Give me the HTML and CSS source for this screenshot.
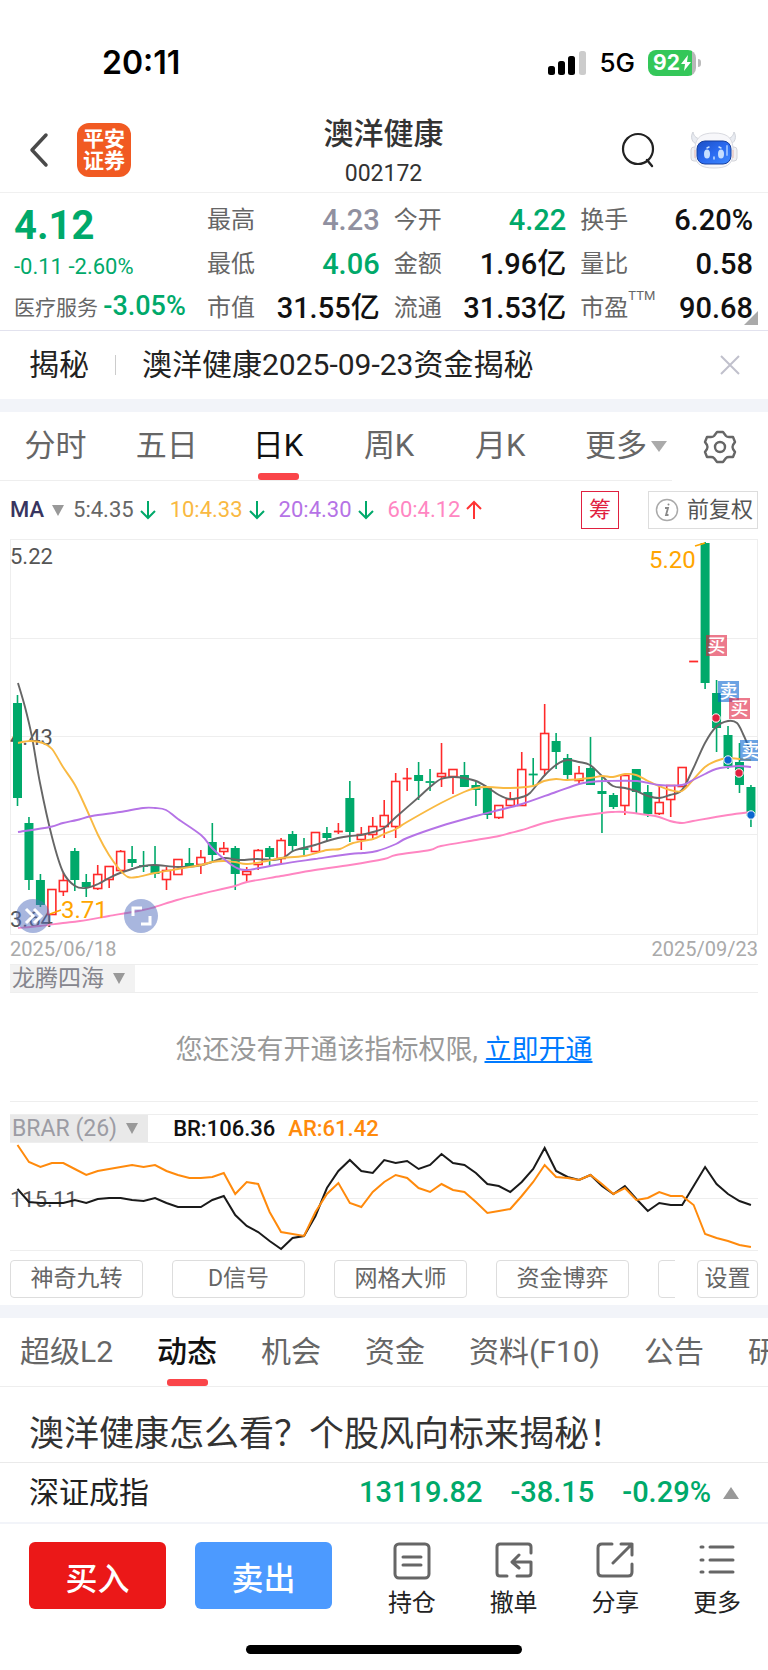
FILE: index.html
```html
<!DOCTYPE html>
<html lang="zh-CN">
<head>
    <meta charset="UTF-8">
    <meta name="viewport" content="width=device-width, initial-scale=1.0">
    <title>澳洋健康 002172</title>
    <link rel="stylesheet" href="styles.css">
</head>
<body>
    <div class="status-bar">
        <span class="time">20:11</span>
        <div class="status-icons">
            <svg class="signal" width="38" height="24" viewBox="0 0 38 24">
                <rect x="0" y="15" width="7" height="9" rx="2.5"/>
                <rect x="10" y="10" width="7" height="14" rx="2.5"/>
                <rect x="20" y="5" width="7" height="19" rx="2.5"/>
                <rect x="31" y="0" width="7" height="24" rx="2.5" fill="#ccc"/>
            </svg>
            <span class="network">5G</span>
            <div class="battery">
                <span>92</span>
                <svg width="12" height="16" viewBox="0 0 12 16"><path d="M8 0L1 9h4l-1 7 7-9H7z" fill="#fff"/></svg>
            </div>
        </div>
    </div>

    <header class="nav">
        <div class="nav-left">
            <button class="icon-button" aria-label="返回">
                <svg width="20" height="36" viewBox="0 0 20 36"><path d="M17 3L3 18l14 15" fill="none" stroke="#4a4a4a" stroke-width="3.5" stroke-linecap="round" stroke-linejoin="round"/></svg>
            </button>
            <a class="logo" href="#">平安<br>证券</a>
        </div>
        <div class="nav-title">
            <h1>澳洋健康</h1>
            <span>002172</span>
        </div>
        <div class="nav-right">
            <button class="icon-button" aria-label="搜索">
                <svg width="34" height="36" viewBox="0 0 34 36"><circle cx="17" cy="17" r="15" fill="none" stroke="#222" stroke-width="2.2"/><path d="M26 28l5 6" stroke="#222" stroke-width="2.4" stroke-linecap="round"/></svg>
            </button>
            <button class="icon-button" aria-label="智能助手">
                <svg width="48" height="38" viewBox="0 0 48 38">
                    <defs>
                        <linearGradient id="screen" x1="0" y1="0" x2="1" y2="1">
                            <stop offset="0" stop-color="#1c4fc4"/><stop offset="0.5" stop-color="#2a6af0"/><stop offset="1" stop-color="#3f8bff"/>
                        </linearGradient>
                    </defs>
                    <path d="M3 1c-3 5-1 11 4 12l5-5C7 8 4 6 3 1zM44 1c3 5 1 11-4 12l-5-5c5 0 8-2 9-7z" fill="#e9ecf2" stroke="#d0d3da"/>
                    <rect x="1" y="16" width="8" height="14" rx="3" fill="#f1f1f4" stroke="#d3d4d9"/>
                    <rect x="39" y="16" width="8" height="14" rx="3" fill="#f1f1f4" stroke="#d3d4d9"/>
                    <path d="M24 2c12 0 18 4 19 14v8c-1 10-7 13-19 13S6 34 5 24v-8C6 6 12 2 24 2z" fill="#f7f7fa" stroke="#d9dae0"/>
                    <path d="M5 19v8M43 19v8" stroke="#efbdb3"/>
                    <rect x="7" y="10" width="34" height="23" rx="8" fill="url(#screen)" stroke="#173f9e"/>
                    <path d="M37 15v9" stroke="#8bb7ff" stroke-width="2" stroke-linecap="round"/>
                    <ellipse cx="17" cy="23" rx="3" ry="4.5" fill="#c6dfff"/>
                    <ellipse cx="31" cy="23" rx="3" ry="4.5" fill="#c6dfff"/>
                    <path d="M17 17l2-1M31 17l-2-1M24 26v2" stroke="#c6dfff" stroke-width="1.5" stroke-linecap="round"/>
                </svg>
            </button>
        </div>
    </header>

    <section class="quote">
        <div class="quote-main">
            <div class="price">4.12</div>
            <div class="change">-0.11 -2.60%</div>
            <div class="sector">医疗服务 <b>-3.05%</b></div>
        </div>
        <dl class="stats">
            <div><dt>最高</dt><dd class="flat">4.23</dd></div>
            <div><dt>今开</dt><dd class="down">4.22</dd></div>
            <div><dt>换手</dt><dd>6.20%</dd></div>
            <div><dt>最低</dt><dd class="down">4.06</dd></div>
            <div><dt>金额</dt><dd>1.96亿</dd></div>
            <div><dt>量比</dt><dd>0.58</dd></div>
            <div><dt>市值</dt><dd>31.55亿</dd></div>
            <div><dt>流通</dt><dd>31.53亿</dd></div>
            <div><dt>市盈<sup>TTM</sup></dt><dd>90.68</dd></div>
        </dl>
    </section>

    <section class="promo">
        <span>揭秘</span>
        <i></i>
        <a href="#">澳洋健康2025-09-23资金揭秘</a>
        <button class="icon-button" aria-label="关闭">
            <svg width="20" height="20" viewBox="0 0 20 20"><path d="M1 1l18 18M19 1L1 19" stroke="#c0c0cc" stroke-width="2"/></svg>
        </button>
    </section>

    <nav class="period">
        <div class="period-tabs">
            <button>分时</button>
            <button>五日</button>
            <button class="active">日K</button>
            <button>周K</button>
            <button>月K</button>
            <button class="more">更多<span class="caret"></span></button>
        </div>
        <button class="icon-button settings" aria-label="设置">
            <svg width="34" height="34" viewBox="0 0 34 34" fill="none" stroke="#666" stroke-width="2.4" stroke-linejoin="round"><path d="M14 2h6l3 4q1 1 3 1h4l2 5-2 3q-1 2 0 4l2 3-2 5h-4q-2 0-3 1l-3 4h-6l-3-4q-1-1-3-1H4l-2-5 2-3q1-2 0-4l-2-3 2-5h4q2 0 3-1z"/><circle cx="17" cy="17" r="5"/></svg>
        </button>
    </nav>

    <section class="ma">
        <button class="ma-name">MA<span class="caret"></span></button>
        <span class="ma5">5:4.35<svg class="arrow"><use href="#arrow-down"/></svg></span>
        <span class="ma10">10:4.33<svg class="arrow"><use href="#arrow-down"/></svg></span>
        <span class="ma20">20:4.30<svg class="arrow"><use href="#arrow-down"/></svg></span>
        <span class="ma60">60:4.12<svg class="arrow"><use href="#arrow-up"/></svg></span>
        <button class="chips">筹</button>
        <button class="adjust">
            <svg width="24" height="24" viewBox="0 0 24 24" fill="none" stroke="#aaa" stroke-width="1.5"><circle cx="12" cy="12" r="10.5"/><path d="M10 10h3l-2 7h2.5" stroke="#888" stroke-width="1.8"/><circle cx="13.5" cy="6.5" r="1" fill="#888" stroke="none"/></svg>
            前复权
        </button>
    </section>
    <svg class="defs" width="0" height="0">
        <symbol id="arrow-down" viewBox="0 0 16 20"><path d="M8 1v17M1 11l7 7 7-7" fill="none" stroke="#00a96a" stroke-width="2"/></symbol>
        <symbol id="arrow-up" viewBox="0 0 16 20"><path d="M8 19V2M1 9l7-7 7 7" fill="none" stroke="#ff3333" stroke-width="2"/></symbol>
    </svg>

    <section class="charts">
        <div class="kline">
            <svg id="kline" viewBox="0 0 748 396"></svg>
            <button class="round expand" aria-label="展开">
                <svg width="34" height="34" viewBox="0 0 34 34"><path d="M10 10l7 7-7 7M18 10l7 7-7 7" fill="none" stroke="#fff" stroke-width="3"/></svg>
            </button>
            <button class="round full" aria-label="全屏">
                <svg width="34" height="34" viewBox="0 0 34 34"><path d="M9 17V9h9M26 17v8h-9" fill="none" stroke="#fff" stroke-width="3"/></svg>
            </button>
        </div>
        <div class="dates"><span>2025/06/18</span><span>2025/09/23</span></div>

        <div class="indicator-head">
            <button class="tag">龙腾四海<span class="caret"></span></button>
        </div>
        <p class="locked">您还没有开通该指标权限, <a href="#">立即开通</a></p>

        <div class="indicator-head">
            <button class="tag dark">BRAR (26)<span class="caret"></span></button>
            <b class="br">BR:106.36</b>
            <b class="ar">AR:61.42</b>
        </div>
        <svg id="brar" viewBox="0 0 748 108"></svg>

        <div class="tools">
            <div class="tools-list">
                <button>神奇九转</button>
                <button>D信号</button>
                <button>网格大师</button>
                <button>资金博弈</button>
                <button aria-label="更多指标"></button>
            </div>
            <button class="tools-set">设置</button>
        </div>
    </section>

    <nav class="info-tabs">
        <a href="#">超级L2</a>
        <a href="#" class="active">动态</a>
        <a href="#">机会</a>
        <a href="#">资金</a>
        <a href="#">资料(F10)</a>
        <a href="#">公告</a>
        <a href="#">研报</a>
    </nav>

    <h2 class="headline">澳洋健康怎么看？个股风向标来揭秘！</h2>

    <section class="index-row">
        <span class="index-name">深证成指</span>
        <b>13119.82</b>
        <b>-38.15</b>
        <b>-0.29%</b>
        <span class="caret up"></span>
    </section>

    <footer class="actions">
        <button class="trade buy">买入</button>
        <button class="trade sell">卖出</button>
        <div class="action-list">
            <button>
                <svg width="38" height="38" viewBox="0 0 38 38"><rect x="2" y="2" width="34" height="34" rx="4"/><path d="M10 15h18M10 23h18"/></svg>
                持仓
            </button>
            <button>
                <svg width="38" height="38" viewBox="0 0 38 38"><path d="M36 11V5q0-3-3-3H5Q2 2 2 5v26q0 3 3 3h7M22 34h11q3 0 3-3V20H18M24 13l-7 7 7 6"/></svg>
                撤单
            </button>
            <button>
                <svg width="38" height="38" viewBox="0 0 38 38"><path d="M16 2H6Q2 2 2 6v24q0 4 4 4h26q4 0 4-4v-8M25 2h11v11M36 2L17 21"/></svg>
                分享
            </button>
            <button>
                <svg width="38" height="38" viewBox="0 0 38 38"><path d="M3 5h2M12 5h23M3 18h2M12 18h23M3 30h2M12 30h23"/></svg>
                更多
            </button>
        </div>
    </footer>
    <div class="home-bar"></div>

    <script src="script.js"></script>
</body>
</html>
```
FILE: styles.css
```css
* {
    box-sizing: border-box;
}
body {
    margin: 0;
    background-color: #fff;
    color: #222;
    font-family: Roboto, "Noto Sans CJK SC", sans-serif;
    font-size: 24px;
    overflow-x: hidden;
}
button {
    margin: 0;
    padding: 0;
    border: none;
    background: none;
    color: inherit;
    font: inherit;
    white-space: nowrap;
}
a {
    color: inherit;
    text-decoration: none;
}
h1, h2, p, dl, dd {
    margin: 0;
    font-weight: normal;
}
svg {
    display: block;
}
.defs {
    position: absolute;
}
.icon-button {
    display: flex;
    align-items: center;
}
.caret {
    border: 6px solid transparent;
    border-top: 11px solid #999;
    border-bottom: none;
}

/* status bar */
.status-bar {
    display: flex;
    justify-content: space-between;
    align-items: center;
    padding: 43px 72px 25px 102px;
    line-height: 40px;
    color: #000;
    font-family: Inter, sans-serif;
}
.time {
    font-size: 32px;
    font-weight: 600;
}
.status-icons {
    display: flex;
    align-items: center;
    gap: 13px;
}
.network {
    font-size: 26px;
    font-weight: 500;
}
.battery {
    display: flex;
    align-items: center;
    position: relative;
    width: 48px;
    height: 26px;
    padding-left: 5px;
    border-radius: 8px;
    background: linear-gradient(to right, #34c759 44px, #b8b8b8 44px);
    color: #fff;
    font-size: 21px;
    font-weight: 700;
}
.battery::after {
    content: "";
    position: absolute;
    right: -5px;
    top: 9px;
    width: 3px;
    height: 8px;
    border-radius: 0 4px 4px 0;
    background-color: #bbb;
}

/* title bar */
.nav {
    display: grid;
    grid-template-columns: 1fr auto 1fr;
    align-items: center;
    height: 85px;
    padding: 0 30px 0 29px;
    border-bottom: 1px solid #f0f0f0;
}
.nav-left {
    display: flex;
    align-items: center;
    gap: 28px;
}
.nav-right {
    display: flex;
    align-items: center;
    justify-content: flex-end;
    gap: 35px;
}
.logo {
    width: 54px;
    height: 54px;
    padding-top: 5px;
    border-radius: 12px;
    background-color: #f15a22;
    color: #fff;
    font-size: 21px;
    font-weight: bold;
    line-height: 22px;
    text-align: center;
}
.nav-title {
    padding-top: 5px;
    text-align: center;
    color: #333;
}
.nav-title h1 {
    font-size: 30px;
    font-weight: 500;
    line-height: 42px;
}
.nav-title span {
    display: block;
    font-size: 23px;
    line-height: 37px;
}

/* quote */
.quote {
    display: grid;
    grid-template-columns: 179px 1fr;
    gap: 14px;
    position: relative;
    padding: 5px 15px 0 14px;
    border-bottom: 1px solid #e2e2ee;
}
.quote::after {
    content: "";
    position: absolute;
    right: 10px;
    bottom: 5px;
    border: 7px solid #aaa;
    border-top-color: transparent;
    border-left-color: transparent;
}
.quote-main {
    display: flex;
    flex-direction: column;
    color: #00a96a;
}
.price {
    font-size: 40px;
    font-weight: bold;
    line-height: 56px;
}
.change {
    font-size: 22px;
    line-height: 26px;
}
.sector {
    margin-top: auto;
    font-size: 21px;
    line-height: 44px;
    white-space: nowrap;
    color: #666;
}
.sector b {
    font-size: 27px;
    font-weight: 500;
    color: #00a96a;
}
.stats {
    display: grid;
    grid-template-columns: repeat(3, 1fr);
    column-gap: 14px;
}
.stats div {
    display: flex;
    justify-content: space-between;
    line-height: 44px;
    white-space: nowrap;
}
.stats dt {
    color: #666;
}
.stats sup {
    font-size: 13px;
    line-height: 0;
    vertical-align: 16px;
}
.stats dd {
    color: #111;
    font-size: 29px;
    font-weight: 500;
}
.stats .down {
    color: #00a96a;
}
.stats .flat {
    color: #9090a0;
}

.promo {
    display: flex;
    align-items: center;
    padding: 0 28px 0 29px;
    border-bottom: 13px solid #f2f4f9;
    font-size: 30px;
    line-height: 68px;
}
.promo i {
    width: 1px;
    height: 20px;
    margin: 0 26px;
    background-color: #ccc;
}
.promo button {
    margin-left: auto;
}

/* period tabs */
.period {
    display: flex;
    font-size: 31px;
    line-height: 68px;
    color: #666;
}
.period-tabs {
    display: flex;
    flex: 7;
    border-bottom: 1px solid #eee;
}
.period-tabs button {
    flex: 1;
    position: relative;
}
.period-tabs .active,
.info-tabs .active {
    color: #111;
}
.period-tabs .active::after,
.info-tabs .active::after {
    content: "";
    position: absolute;
    left: calc(50% - 20px);
    bottom: 0;
    width: 41px;
    height: 7px;
    border-radius: 3px;
    background-color: #fa4549;
}
.period-tabs .more {
    display: flex;
    align-items: center;
    justify-content: flex-end;
    gap: 4px;
    padding-right: 5px;
}
.period-tabs .caret {
    border-width: 11px 8px 0;
    border-top-color: #aaa;
}
.settings {
    flex: 1;
    justify-content: center;
}

/* moving averages */
.ma {
    display: flex;
    align-items: center;
    gap: 14px;
    padding: 10px 10px 10px;
    font-size: 22px;
    line-height: 38px;
}
.ma span, .ma button {
    display: flex;
    align-items: center;
}
.ma .ma-name {
    gap: 8px;
    margin-right: -5px;
    color: #383560;
    font-weight: 500;
}
.arrow {
    width: 16px;
    height: 20px;
    margin-left: 6px;
}
.ma5 { color: #666; }
.ma10 { color: #f9b942; }
.ma20 { color: #b573e6; }
.ma60 { color: #ff86c2; }
.ma .chips {
    margin-left: auto;
    padding: 0 7px;
    border: 1px solid #e0203f;
    color: #e0203f;
    line-height: 36px;
}
.ma .adjust {
    gap: 8px;
    margin-left: 15px;
    padding: 0 4px 0 6px;
    border: 1px solid #ddd;
    color: #555;
    line-height: 36px;
}

/* charts */
.charts {
    padding: 0 10px 7px;
    border-bottom: 13px solid #f2f4f9;
}
.kline {
    position: relative;
}
#kline, #brar {
    width: 100%;
    height: auto;
}
.round {
    position: absolute;
    bottom: 2px;
    width: 34px;
    height: 34px;
    border-radius: 50%;
    background-color: rgba(82, 110, 190, 0.5);
}
.expand { left: 6px; }
.full { left: 114px; }
.axis { fill: #555; font-size: 22px; }
.peak { fill: #ffa500; font-size: 24px; }
.mark { fill: #fff; font-size: 18px; font-weight: 500; text-anchor: middle; }
.dates {
    display: flex;
    justify-content: space-between;
    color: #aaa;
    font-size: 20px;
    line-height: 29px;
}
.indicator-head {
    display: flex;
    align-items: center;
    border-top: 1px solid #eee;
    border-bottom: 1px solid #eee;
    font-size: 22px;
    line-height: 27px;
}
.tag {
    display: flex;
    align-items: center;
    gap: 9px;
    padding: 0 10px 0 2px;
    background-color: #f2f2f2;
    color: #85858d;
    font-size: 23px;
}
.dark {
    background-color: #e9e9e9;
    color: #9c9ca4;
}
.indicator-head b {
    font-weight: 500;
}
.br {
    margin: 0 13px 0 25px;
    color: #111;
}
.ar {
    color: #ff8a0c;
}
.locked {
    margin-bottom: 12px;
    padding-top: 7px;
    border-bottom: 1px solid #eee;
    color: #999;
    font-size: 27px;
    line-height: 101px;
    text-align: center;
}
.locked a {
    color: #007aff;
    text-decoration: underline;
}

/* tool buttons */
.tools {
    display: flex;
    gap: 22px;
    padding-top: 9px;
}
.tools-list {
    display: flex;
    flex: 1;
    gap: 29px;
    overflow: hidden;
}
.tools button {
    flex: none;
    width: 133px;
    height: 38px;
    border: 1px solid #ddd;
    border-radius: 4px;
    color: #666;
    font-size: 23px;
    line-height: 36px;
}
.tools .tools-set {
    width: 61px;
}

/* info */
.info-tabs {
    display: flex;
    gap: 44px;
    padding-left: 20px;
    border-bottom: 1px solid #eee;
    color: #666;
    font-size: 30px;
    line-height: 68px;
    white-space: nowrap;
    overflow: hidden;
}
.info-tabs a {
    position: relative;
}
.info-tabs .active {
    font-weight: 500;
}
.headline {
    padding-left: 29px;
    padding-top: 20px;
    border-bottom: 1px solid #eaeaea;
    color: #333;
    font-size: 35px;
    line-height: 55px;
    white-space: nowrap;
}
.index-row {
    display: flex;
    align-items: center;
    gap: 28px;
    padding: 0 29px 0 29px;
    border-bottom: 2px solid #f2f4f9;
    font-size: 30px;
    line-height: 59px;
}
.index-row b {
    color: #00a96a;
    font-size: 29px;
    font-weight: 500;
}
.index-name {
    margin-right: auto;
}
.up {
    margin-left: -16px;
    border: 8px solid transparent;
    border-top: none;
    border-bottom: 12px solid #999;
}

/* bottom actions */
.actions {
    display: flex;
    gap: 29px;
    padding: 18px 0 24px 29px;
}
.trade {
    width: 137px;
    height: 67px;
    border-radius: 6px;
    color: #fff;
    font-size: 32px;
    font-weight: 500;
}
.buy { background-color: #eb1818; }
.sell { background-color: #4c9aff; }
.action-list {
    display: flex;
    flex: 1;
}
.action-list button {
    display: flex;
    flex: 1;
    flex-direction: column;
    align-items: center;
    gap: 5px;
    line-height: 36px;
}
.action-list svg {
    fill: none;
    stroke: #666;
    stroke-width: 3;
    stroke-linecap: round;
    stroke-linejoin: round;
}
.home-bar {
    width: 276px;
    height: 9px;
    margin: 0 auto 16px;
    border-radius: 5px;
    background-color: #000;
}
```
FILE: script.js
```js
const STEP = 11.46;
const FIRST = 7.5;
const GREEN = '#00a96a';
const RED = '#ff2a2a';

// high, body top, body bottom, low, 1 = rising
const candles = [
    [156,164,259,267,0], [278,284,341,351,0], [335,341,366,368,0], [350,350,376,376,1], [334,341,353,357,1],
    [309,312,341,352,0], [335,343,348,358,0], [326,335,350,351,1], [327,327,341,349,1], [311,312,332,333,1],
    [307,320,324,328,0], [312,326,328,333,0], [307,326,335,339,0], [328,331,341,351,1], [320,320,336,336,1],
    [309,324,328,328,0], [311,318,326,335,1], [284,303,316,322,0], [303,309,313,316,1], [307,309,335,351,0],
    [328,332,336,343,1], [310,311,326,331,1], [307,309,318,327,0], [299,301,320,324,1], [292,295,307,313,0],
    [299,309,311,316,0], [293,293,313,313,1], [288,294,299,303,0], [284,292,293,295,1], [242,259,293,303,0],
    [288,295,301,311,1], [278,287,296,301,1], [261,276,288,299,1], [234,242,288,299,1], [229,239,240,252,1],
    [223,236,242,261,0], [230,242,244,252,0], [204,234,238,248,1], [230,230,238,255,1], [223,236,248,248,0],
    [242,246,251,267,0], [248,249,276,280,0], [266,266,279,280,1], [253,260,267,267,1], [213,230,267,267,1],
    [219,235,236,247,0], [165,194,231,237,1], [194,202,213,230,0], [215,219,236,241,0], [227,234,242,245,1],
    [198,229,246,246,0], [237,252,255,294,0], [254,256,268,270,0], [236,236,267,276,1], [230,230,253,274,0],
    [246,253,275,278,0], [246,263,275,276,1], [246,246,261,278,1], [228,228,248,248,1], [122,122,123,123,1],
    [3,4,144,150,0], [141,154,189,213,0], [187,196,227,230,0], [204,223,246,254,0], [246,248,277,288,0]
];

const averages = [
    { color: '#666', points: [8,144,15,168,22,198,30,244,42,298,53,333,65,347,76,349,88,345,99,339,110,334,122,330,133,327,145,326,168,328,187,327,202,323,214,319,230,321,247,320,263,321,273,319,283,312,293,309,305,306,317,302,328,299,340,297,351,296,363,293,374,289,386,278,409,258,420,248,431,240,443,238,454,239,466,242,477,248,489,256,500,260,512,258,520,254,534,237,546,226,557,221,569,223,580,226,592,237,603,247,615,249,626,252,638,257,649,259,660,256,672,251,683,230,695,204,706,188,718,182,727,184,733,195,737,204,741,214] },
    { color: '#f9b942', points: [8,204,20,202,33,204,42,210,53,228,65,246,76,269,88,296,99,316,110,331,118,338,127,338,145,334,168,330,191,326,202,323,214,322,225,323,237,325,257,322,271,319,294,317,317,311,330,310,343,304,363,300,374,295,386,290,397,283,431,264,454,253,466,249,477,248,500,249,523,247,534,242,546,240,557,241,580,239,592,237,603,238,615,235,626,236,638,242,649,247,660,251,672,252,683,241,695,228,706,222,718,219,729,220,741,221] },
    { color: '#b573e6', points: [8,293,40,288,53,284,67,281,82,277,110,273,133,269,145,269,156,271,168,280,191,296,202,309,214,320,225,328,237,331,271,325,305,320,340,315,353,314,367,312,386,305,397,299,431,287,466,277,489,271,512,265,546,253,569,245,580,243,597,242,627,242,649,246,672,246,683,241,695,235,706,230,718,228,729,227,741,228] },
    { color: '#ff86c2', points: [8,389,30,387,53,384,70,382,99,377,133,371,145,368,167,361,191,355,225,347,237,343,271,337,305,331,340,326,374,320,386,316,420,311,431,307,466,301,489,297,500,294,512,291,534,284,557,279,592,274,603,273,615,273,638,276,649,278,660,282,672,284,683,282,718,276,741,273] }
];

const br = [46,59,60,60,60,57,60,56,55,55,57,58,55,60,64,64,64,57,53,72,83,89,98,106,95,93,73,45,28,17,28,30,17,20,18,26,22,11,20,22,30,41,43,49,39,26,5,28,34,37,32,43,51,43,56,68,60,62,62,43,24,41,51,58,62];
const ar = [2,19,24,20,20,26,32,28,26,24,22,24,22,28,32,35,35,34,30,51,39,41,69,89,91,93,69,51,40,60,64,49,39,32,35,45,49,41,47,49,59,70,68,66,53,39,22,34,35,37,32,41,51,45,57,55,49,53,53,62,91,95,98,102,104];

function line(x1, y1, x2, y2, color, width) {
    return `<line x1="${x1}" y1="${y1}" x2="${x2}" y2="${y2}" stroke="${color}" stroke-width="${width}"/>`;
}

function text(x, y, cls, value) {
    return `<text x="${x}" y="${y}" class="${cls}">${value}</text>`;
}

function candle(c, i) {
    const [high, top, bottom, low, up] = c;
    const x = FIRST + i * STEP;
    const color = up ? RED : GREEN;
    let out = line(x, high, x, top, color, 1.6) + line(x, bottom, x, low, color, 1.6);
    if (bottom - top < 3) {
        out += line(x - 4.5, (top + bottom) / 2, x + 4.5, (top + bottom) / 2, color, 1.8);
    } else if (up) {
        out += `<rect x="${x - 4}" y="${top + 0.5}" width="8" height="${bottom - top - 1}" fill="#fff" stroke="${color}" stroke-width="1.6"/>`;
    } else {
        out += `<rect x="${x - 4.5}" y="${top}" width="9" height="${bottom - top}" fill="${color}"/>`;
    }
    return out;
}

// smooth curve through every point
function curve(flat, color) {
    const p = [];
    for (let i = 0; i < flat.length; i += 2) p.push([flat[i], flat[i + 1]]);
    let d = `M${p[0]}`;
    for (let i = 0; i < p.length - 1; i++) {
        const a = p[i - 1] || p[i], b = p[i], c = p[i + 1], e = p[i + 2] || c;
        d += `C${b[0] + (c[0] - a[0]) / 6} ${b[1] + (c[1] - a[1]) / 6} ${c[0] - (e[0] - b[0]) / 6} ${c[1] - (e[1] - b[1]) / 6} ${c}`;
    }
    return `<path d="${d}" fill="none" stroke="${color}" stroke-width="1.9"/>`;
}

function trade(x, y, dotX, dotY, label) {
    const buy = label === '买';
    return `<rect x="${x}" y="${y}" width="21" height="21" fill="${buy ? '#e0203f' : '#0a66d0'}" opacity="0.6"/>`
        + text(x + 10.5, y + 17, 'mark', label)
        + `<circle cx="${dotX}" cy="${dotY}" r="4.2" fill="${buy ? '#e0203f' : '#0a66d0'}" stroke="#fff" stroke-width="1"/>`;
}

function drawKline() {
    let out = '<rect x="0.5" y="0.5" width="747" height="395" fill="none" stroke="#eee"/>';
    [99.5, 197.5, 295.5].forEach(y => out += line(0, y, 748, y, '#eee', 1));
    out += text(0, 25, 'axis', '5.22') + text(0, 206, 'axis', '4.43') + text(0, 388, 'axis', '3.64');
    out += candles.map(candle).join('');
    averages.forEach(a => out += curve(a.points, a.color));
    out += line(685, 7, 695, 4, '#ffa500', 1.6) + text(639, 29, 'peak', '5.20');
    out += line(40, 375, 51, 371, '#ffa500', 1.6) + text(51, 379, 'peak', '3.71');
    out += trade(696, 96, 706, 179, '买') + trade(708, 142, 718, 221, '卖');
    out += trade(719, 159, 729, 234, '买') + trade(730, 201, 741, 276, '卖');
    document.getElementById('kline').innerHTML = out;
}

function drawBrar() {
    const poly = (data, color) => `<polyline points="${data.map((y, i) => (FIRST + i * STEP) + ',' + y).join(' ')}" fill="none" stroke="${color}" stroke-width="2"/>`;
    let out = line(0, 55.5, 748, 55.5, '#eee', 1) + line(0, 107.5, 748, 107.5, '#eee', 1);
    out += text(0, 64, 'axis', '115.11');
    out += poly(br, '#1a1a1a') + poly(ar, '#ff8a0c');
    document.getElementById('brar').innerHTML = out;
}

drawKline();
drawBrar();
```
